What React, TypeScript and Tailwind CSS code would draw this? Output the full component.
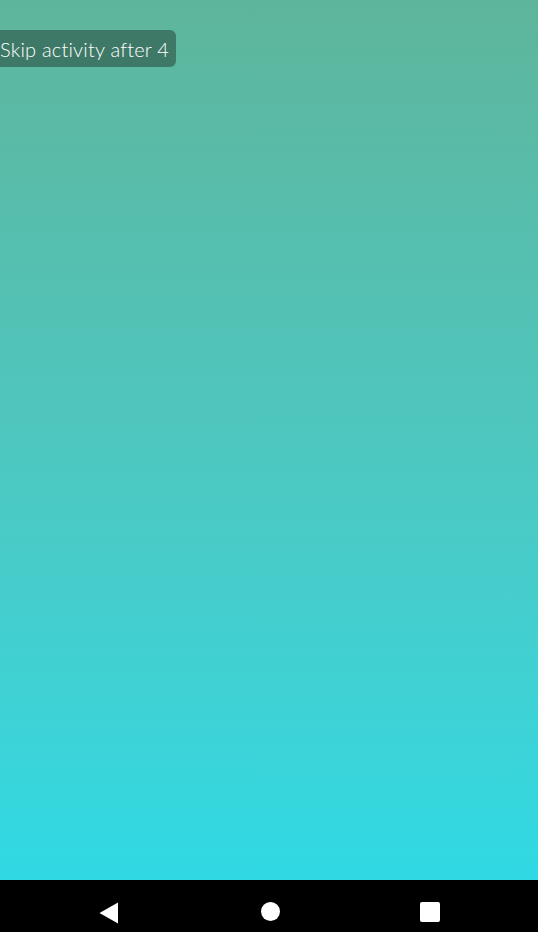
export default function App() {
  return (
    <div className="flex h-[932px] w-[538px] flex-col overflow-hidden">
      <div className="flex-1 bg-gradient-to-b from-[#5eb59b] to-[#2fd9e4] pt-[30px]">
        <div className="flex h-[37px] w-[176px] items-center rounded-r-[6px] bg-[#3e7967] pr-[6px]">
          <span
            className="whitespace-nowrap text-[20px] font-light leading-none tracking-[0.2px] text-white"
            style={{ fontFamily: '"Lato", "Noto Sans", sans-serif' }}
          >
            Skip activity after 4
          </span>
        </div>
      </div>
      <div className="flex h-[52px] items-center bg-black">
        <div className="relative h-full w-full">
          <svg className="absolute left-[99px] top-[22px]" width="20" height="22" viewBox="0 0 20 22">
            <path d="M19 0.5 L19 21.5 L0.5 11 Z" fill="white" />
          </svg>
          <div className="absolute left-[261px] top-[22px] h-[19px] w-[19px] rounded-full bg-white" />
          <div className="absolute left-[420px] top-[22px] h-[20px] w-[20px] rounded-[2px] bg-white" />
        </div>
      </div>
    </div>
  );
}
